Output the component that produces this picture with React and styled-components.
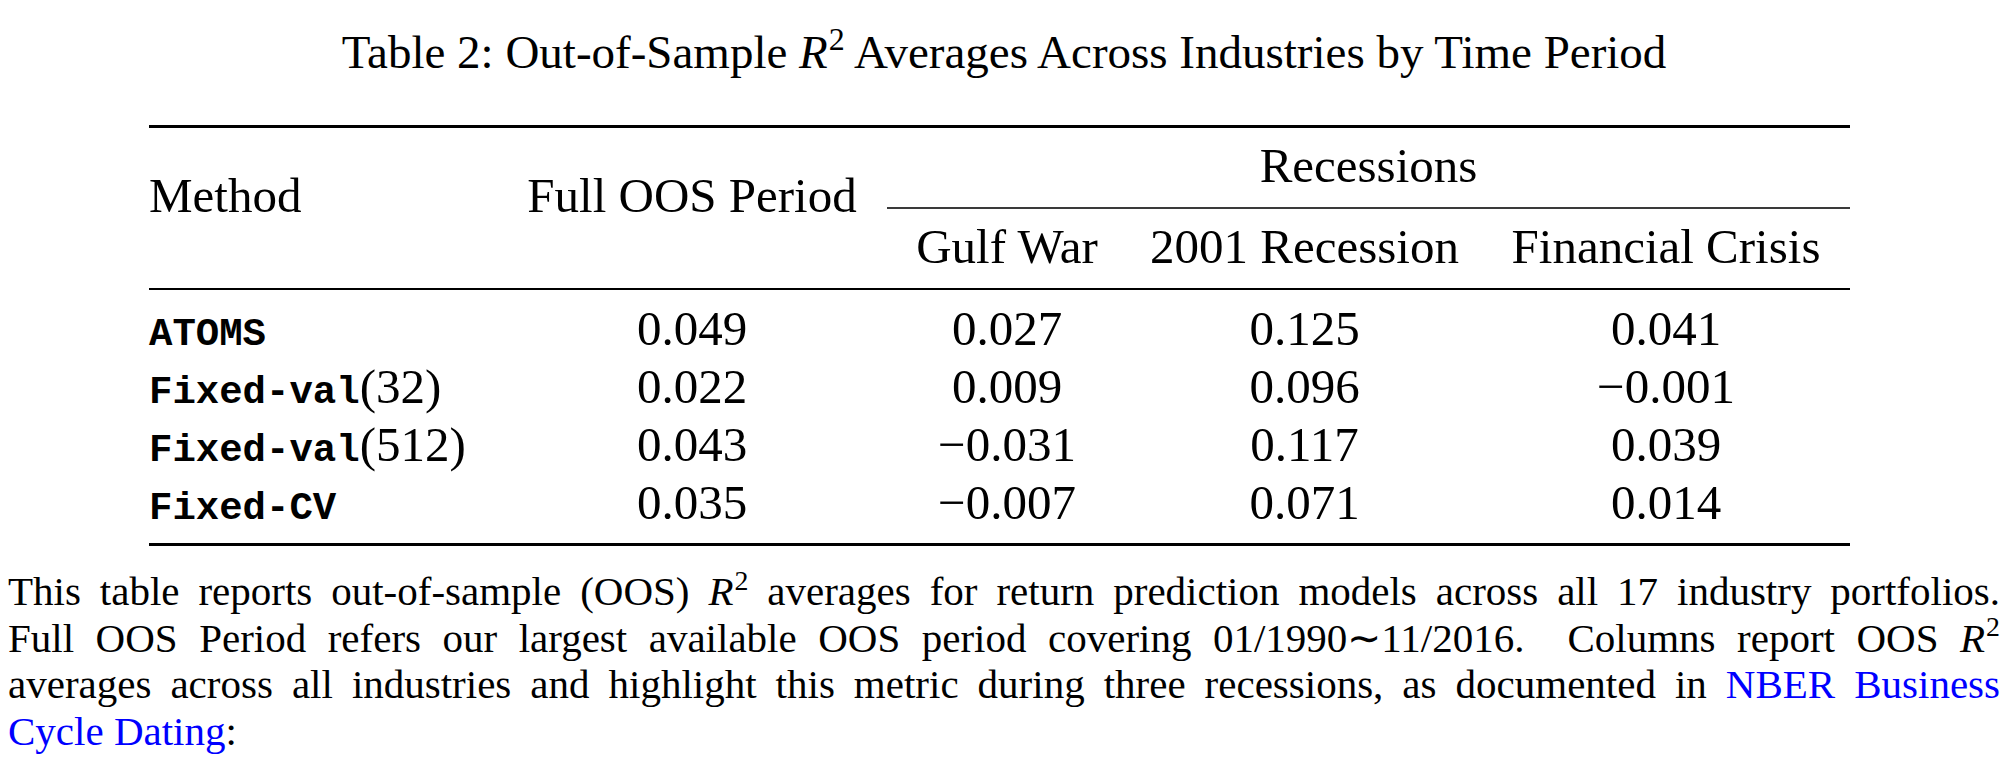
import React from "react";
import styled, { createGlobalStyle, css } from "styled-components";

const Global = createGlobalStyle`
  html, body {
    margin: 0;
    padding: 0;
    background: #ffffff;
  }
  body {
    font-family: "Liberation Serif", "Times New Roman", serif;
    color: #000000;
  }
`;

const Page = styled.div`
  padding: 24px 8px 0;
  width: 2008px;
  box-sizing: border-box;
`;

const Caption = styled.div`
  font-size: 47px;
  line-height: 56px;
  text-align: center;
`;

const Var = styled.span`
  font-style: italic;
`;

const Sup = styled.sup`
  font-size: 0.68em;
  line-height: 0;
  vertical-align: 0.55em;
  margin-left: 1px;
`;

const Table = styled.div`
  margin: 45px 0 0 141px;
  width: 1701px;
  display: flex;
  flex-direction: column;
`;

const Rule = styled.div`
  height: ${(p) => p.$weight}px;
  background: #000000;
`;

const columns = css`
  display: grid;
  grid-template-columns: 348px 390px 240px 355px 368px;
`;

const HeadGrid = styled.div`
  ${columns};
  grid-template-rows: 81px 79px;
  font-size: 49px;
`;

const BodyGrid = styled.div`
  ${columns};
  grid-auto-rows: 58px;
  padding: 10px 0 11px;
  font-size: 49px;
`;

const SpanHead = styled.div`
  grid-row: 1 / span 2;
  grid-column: ${(p) => p.$col};
  padding-top: 40px;
  line-height: 55px;
  text-align: ${(p) => (p.$left ? "left" : "center")};
  white-space: nowrap;
`;

const GroupHead = styled.div`
  grid-row: 1;
  grid-column: 3 / span 3;
  padding: 10px 0 14px;
  line-height: 55px;
  text-align: center;
  border-bottom: 2px solid #3a3a3a;
`;

const SubHead = styled.div`
  grid-row: 2;
  padding: 10px 0 14px;
  line-height: 55px;
  text-align: center;
  white-space: nowrap;
`;

const Cell = styled.div`
  height: 58px;
  line-height: 58px;
  white-space: nowrap;
  text-align: ${(p) => (p.$left ? "left" : "center")};
`;

const Mono = styled.span`
  font-family: "Liberation Mono", "Courier New", monospace;
  font-size: 39px;
  line-height: 1;
  font-weight: 700;
`;

const Note = styled.div`
  margin-top: 22px;
  font-size: 41px;
  line-height: 46.67px;
`;

const NoteLine = styled.div`
  text-align: ${(p) => (p.$last ? "left" : "justify")};
  text-align-last: ${(p) => (p.$last ? "left" : "justify")};
  white-space: ${(p) => (p.$last ? "nowrap" : "normal")};
`;

const Link = styled.span`
  color: #0000ff;
`;

const M = "\u2212";

const rows = [
  { name: "ATOMS", arg: "", vals: ["0.049", "0.027", "0.125", "0.041"] },
  { name: "Fixed-val", arg: "(32)", vals: ["0.022", "0.009", "0.096", `${M}0.001`] },
  { name: "Fixed-val", arg: "(512)", vals: ["0.043", `${M}0.031`, "0.117", "0.039"] },
  { name: "Fixed-CV", arg: "", vals: ["0.035", `${M}0.007`, "0.071", "0.014"] },
];

const R2 = () => (
  <>
    <Var>R</Var>
    <Sup>2</Sup>
  </>
);

export default function App() {
  return (
    <Page>
      <Global />
      <Caption>
        Table 2: Out-of-Sample <R2 /> Averages Across Industries by Time Period
      </Caption>
      <Table>
        <Rule $weight={3} />
        <HeadGrid>
          <SpanHead $left $col={1}>Method</SpanHead>
          <SpanHead $col={2}>Full OOS Period</SpanHead>
          <GroupHead>Recessions</GroupHead>
          <SubHead>Gulf War</SubHead>
          <SubHead>2001 Recession</SubHead>
          <SubHead>Financial Crisis</SubHead>
        </HeadGrid>
        <Rule $weight={2} />
        <BodyGrid>
          {rows.map((r, i) => (
            <React.Fragment key={i}>
              <Cell $left>
                <Mono>{r.name}</Mono>
                {r.arg}
              </Cell>
              {r.vals.map((v, j) => (
                <Cell key={j}>{v}</Cell>
              ))}
            </React.Fragment>
          ))}
        </BodyGrid>
        <Rule $weight={3} />
      </Table>
      <Note>
        <NoteLine>
          This table reports out-of-sample (OOS) <R2 /> averages for return
          prediction models across all 17 industry portfolios.
        </NoteLine>
        <NoteLine>
          Full OOS Period refers our largest available OOS period covering
          01/1990{"\u223C"}11/2016.{"\u00A0"} Columns report OOS <R2 />
        </NoteLine>
        <NoteLine>
          averages across all industries and highlight this metric during three
          recessions, as documented in <Link>NBER Business</Link>
        </NoteLine>
        <NoteLine $last>
          <Link>Cycle Dating</Link>:
        </NoteLine>
      </Note>
    </Page>
  );
}
